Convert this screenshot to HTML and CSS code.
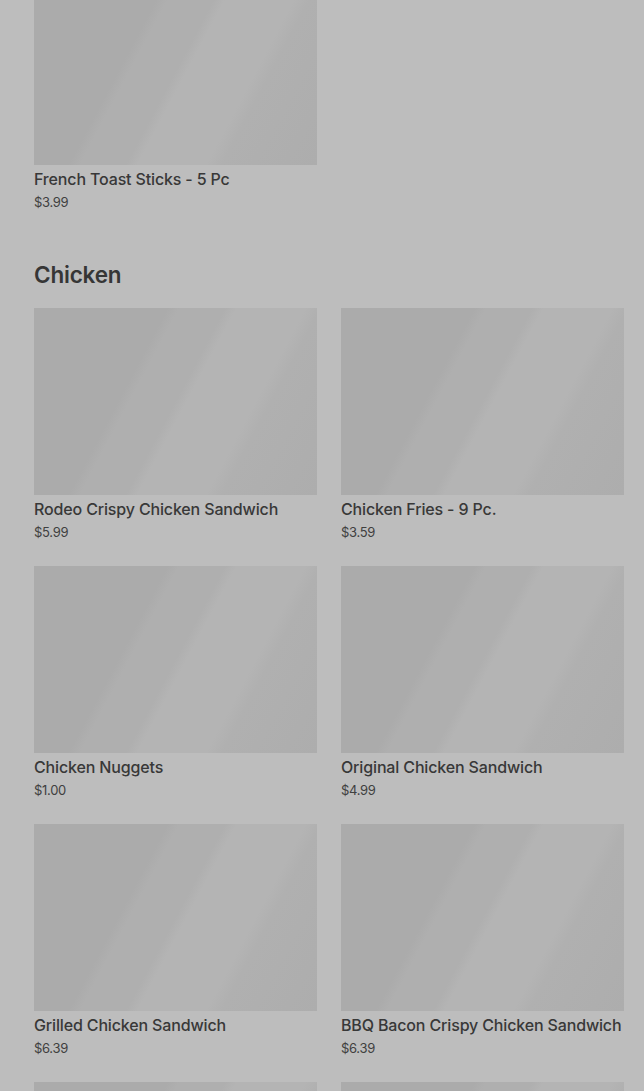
FILE: index.html
```html
<!DOCTYPE html>
<html>
<head>
<meta charset="utf-8">
<link rel="stylesheet" href="styles.css">
</head>
<body>
<main class="menu">
  <section class="section section-first">
    <div class="grid">
      <div class="card"><div class="thumb"></div><div class="name">French Toast Sticks - 5 Pc</div><div class="price">$3.99</div></div>
    </div>
  </section>
  <section class="section">
    <h2 class="heading">Chicken</h2>
    <div class="grid">
      <div class="card"><div class="thumb"></div><div class="name">Rodeo Crispy Chicken Sandwich</div><div class="price">$5.99</div></div>
      <div class="card"><div class="thumb"></div><div class="name">Chicken Fries - 9 Pc.</div><div class="price">$3.59</div></div>
      <div class="card"><div class="thumb"></div><div class="name">Chicken Nuggets</div><div class="price">$1.00</div></div>
      <div class="card"><div class="thumb"></div><div class="name">Original Chicken Sandwich</div><div class="price">$4.99</div></div>
      <div class="card"><div class="thumb"></div><div class="name">Grilled Chicken Sandwich</div><div class="price">$6.39</div></div>
      <div class="card"><div class="thumb"></div><div class="name">BBQ Bacon Crispy Chicken Sandwich</div><div class="price">$6.39</div></div>
      <div class="card"><div class="thumb"></div><div class="name">&nbsp;</div><div class="price">&nbsp;</div></div>
      <div class="card"><div class="thumb"></div><div class="name">&nbsp;</div><div class="price">&nbsp;</div></div>
    </div>
  </section>
</main>
</body>
</html>
```
FILE: styles.css
```css
html, body {
  margin: 0;
  padding: 0;
  background: #bdbdbd;
  overflow: hidden;
}
body {
  font-family: Inter, "Liberation Sans", sans-serif;
  color: #3a3a3a;
}
.menu {
  padding: 0 20px 0 34px;
}
.section-first {
  margin-top: -22px;
}
.section + .section {
  margin-top: 49px;
}
.heading {
  margin: 0 0 18px;
  font-size: 22.5px;
  line-height: 30px;
  font-weight: 600;
  letter-spacing: -0.2px;
  color: #363636;
}
.grid {
  display: grid;
  grid-template-columns: 283px 283px;
  column-gap: 24px;
  row-gap: 25px;
}
.thumb {
  height: 187px;
  background: linear-gradient(118deg,
    #ababab 0%, #ababab 35%,
    #afafaf 38%, #afafaf 50%,
    #b4b4b4 53%, #b4b4b4 71%,
    #b0b0b0 75%, #adadad 100%);
}
.name {
  margin-top: 4px;
  font-size: 16px;
  line-height: 20px;
  font-weight: 450;
  letter-spacing: -0.15px;
  color: #383838;
  white-space: nowrap;
}
.price {
  margin-top: 4px;
  font-size: 13px;
  line-height: 18px;
  letter-spacing: -0.3px;
  color: #404040;
}
```
